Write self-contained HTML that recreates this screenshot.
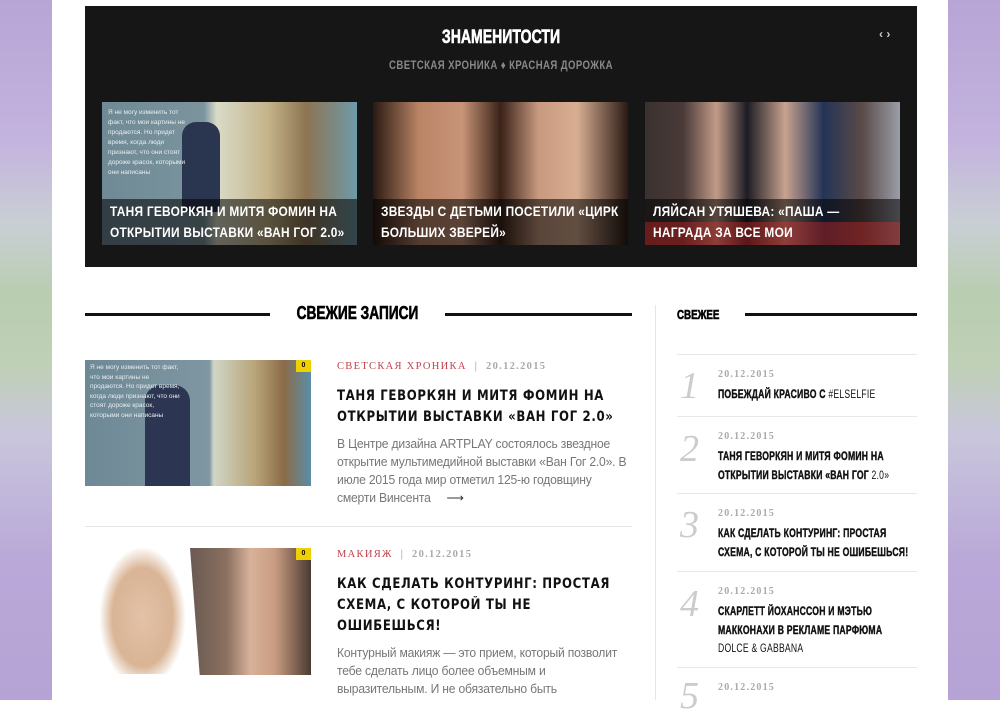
<!DOCTYPE html>
<html><head><meta charset="utf-8"><style>
*{margin:0;padding:0;box-sizing:border-box}
body{width:1000px;height:700px;overflow:hidden;background:#fff;position:relative;font-family:"Liberation Sans",sans-serif}
.side{position:absolute;top:0;width:52px;height:700px;background:linear-gradient(180deg,#b7a5d6 0%,#c3b3de 20%,#c9cfd4 32%,#b9cdb0 42%,#bfd0b6 52%,#c9c6dc 62%,#b9a8d8 80%,#b6a3d5 100%)}
.cond{font-family:"Liberation Sans",sans-serif;font-weight:bold}
.heavy{-webkit-text-stroke:.6px currentColor}
.l{display:block;white-space:nowrap;transform-origin:left center}
.abs{position:absolute}
.dark{left:85px;top:6px;width:832px;height:261px;background:#161616}
.card{position:absolute;top:102px;width:255px;height:143px;overflow:hidden}
.cap{position:absolute;left:0;right:0;bottom:0;height:46px;background:rgba(0,0,0,.55);color:#fff;font-size:14px;line-height:21px;padding:2px 8px;letter-spacing:.3px}
.cap .l{transform:scaleX(.85)}
.meta{font-family:"Liberation Serif",serif;font-size:10.5px;letter-spacing:1.3px;color:#aaa;font-weight:bold}
.meta .c{color:#c0404a;font-weight:normal}
.ptitle{font-family:"DejaVu Sans",sans-serif;font-weight:bold;font-size:14.5px;line-height:21px;letter-spacing:.8px;color:#111}
.ptitle .l{transform:scaleX(.81)}
.ex{font-size:12.5px;line-height:18px;color:#777;letter-spacing:-.2px}
.ex .l{transform:scaleX(.97)}
.badge{position:absolute;width:15px;height:12px;background:#f0d000;font-size:7px;font-weight:bold;text-align:center;line-height:12px}
.sd{position:absolute;left:677px;width:240px;border-top:1px solid #e8e8e8}
.num{position:absolute;left:680px;font-family:"Liberation Serif",serif;font-style:italic;font-size:38px;color:#ccc}
.sdate{position:absolute;left:718px;font-family:"Liberation Serif",serif;font-size:10px;letter-spacing:1.2px;color:#aaa;font-weight:bold}
.st{position:absolute;left:718px;font-size:11.5px;line-height:18.5px;color:#111;letter-spacing:.3px}
.st .l{transform:scaleX(.75)}
.st b{-webkit-text-stroke:.4px #111}
</style></head><body>
<div class="side" style="left:0"></div>
<div class="side" style="right:0"></div>
<div class="abs dark"></div>
<div class="abs cond heavy" style="left:85px;width:832px;top:27px;text-align:center;color:#fff;font-size:19px"><span class="l" style="transform:scaleX(.74);transform-origin:center">ЗНАМЕНИТОСТИ</span></div>
<div class="abs cond" style="left:85px;width:832px;top:58px;text-align:center;color:#888;font-size:12px;letter-spacing:.5px"><span class="l" style="transform:scaleX(.8);transform-origin:center">СВЕТСКАЯ ХРОНИКА ♦ КРАСНАЯ ДОРОЖКА</span></div>
<div class="abs" style="left:879px;top:27px;color:#ccc;font-size:12px;font-weight:bold">‹ ›</div>
<div class="card" style="left:102px;background:linear-gradient(90deg,#6f8a96 0%,#7b949e 40%,#d9dbc8 45%,#c5b48a 65%,#8d7452 80%,#6f9aa8 100%)">
<div class="abs" style="left:80px;top:20px;width:38px;height:90px;background:#2a3550;border-radius:14px 14px 0 0"></div>
<div class="abs" style="left:6px;top:6px;width:80px;color:#e8eef0;font-size:6.5px;line-height:10px">Я не могу изменить тот факт, что мои картины не продаются. Но придет время, когда люди признают, что они стоят дороже красок, которыми они написаны</div>
<div class="cap cond"><span class="l">ТАНЯ ГЕВОРКЯН И МИТЯ ФОМИН НА</span><span class="l">ОТКРЫТИИ ВЫСТАВКИ «ВАН ГОГ 2.0»</span></div></div>
<div class="card" style="left:373px;background:linear-gradient(90deg,#2a1a12 0%,#b98466 18%,#c89478 35%,#3a2218 50%,#c89a80 65%,#d8ae92 80%,#2a1a14 100%)">
<div class="cap cond"><span class="l">ЗВЕЗДЫ С ДЕТЬМИ ПОСЕТИЛИ «ЦИРК</span><span class="l">БОЛЬШИХ ЗВЕРЕЙ»</span></div></div>
<div class="card" style="left:645px;background:linear-gradient(90deg,#3a3230 0%,#4a3a38 15%,#c29b88 28%,#1c1c24 40%,#c8a290 55%,#243456 70%,#5a4a48 85%,#9a9ea8 100%)">
<div class="cap cond" style="background:linear-gradient(rgba(0,0,0,.55) 50%,rgba(120,20,20,.7) 50%)"><span class="l">ЛЯЙСАН УТЯШЕВА: «ПАША —</span><span class="l">НАГРАДА ЗА ВСЕ МОИ</span></div></div>

<div class="abs" style="left:85px;top:313px;width:185px;height:3px;background:#111"></div>
<div class="abs" style="left:445px;top:313px;width:187px;height:3px;background:#111"></div>
<div class="abs cond heavy" style="left:270px;width:175px;top:303px;text-align:center;font-size:18px;color:#000"><span class="l" style="transform:scaleX(.76);transform-origin:center">СВЕЖИЕ ЗАПИСИ</span></div>

<div class="abs" style="left:85px;top:360px;width:226px;height:126px;background:linear-gradient(90deg,#6e8996 0%,#7e97a2 55%,#d0d6c6 57%,#b9a57a 75%,#8c6c48 88%,#5a8ea8 100%)">
<div class="abs" style="left:60px;top:25px;width:45px;height:101px;background:#2c3652;border-radius:16px 16px 0 0"></div>
<div class="abs" style="left:5px;top:3px;width:95px;color:#e8eef0;font-size:6.5px;line-height:9.5px">Я не могу изменить тот факт, что мои картины не продаются. Но придет время, когда люди признают, что они стоят дороже красок, которыми они написаны</div></div>
<div class="badge" style="left:296px;top:360px">0</div>
<div class="abs meta" style="left:337px;top:361px"><span class="c">СВЕТСКАЯ ХРОНИКА</span> &nbsp;|&nbsp; 20.12.2015</div>
<div class="abs ptitle" style="left:337px;top:386px;width:295px"><span class="l">ТАНЯ ГЕВОРКЯН И МИТЯ ФОМИН НА</span><span class="l">ОТКРЫТИИ ВЫСТАВКИ «ВАН ГОГ 2.0»</span></div>
<div class="abs ex" style="left:337px;top:435px;width:300px"><span class="l">В Центре дизайна ARTPLAY состоялось звездное</span><span class="l">открытие мультимедийной выставки «Ван Гог 2.0». В</span><span class="l">июле 2015 года мир отметил 125-ю годовщину</span><span class="l">смерти Винсента &nbsp;&nbsp;&nbsp; <span style="color:#333">⟶</span></span></div>
<div class="abs" style="left:85px;top:526px;width:547px;height:1px;background:#e6e6e6"></div>

<div class="abs" style="left:100px;top:548px;width:85px;height:126px;background:radial-gradient(ellipse at 50% 55%,#e3c2a8 0%,#d9b495 50%,#fff 72%)"></div>
<div class="abs" style="left:190px;top:548px;width:121px;height:127px;background:linear-gradient(90deg,#6a5a52 0%,#8a7060 30%,#d7b29a 50%,#c99c82 70%,#4a3a32 100%);clip-path:polygon(0 0,100% 0,100% 100%,8% 100%)"></div>
<div class="badge" style="left:296px;top:548px">0</div>
<div class="abs meta" style="left:337px;top:549px"><span class="c">МАКИЯЖ</span> &nbsp;|&nbsp; 20.12.2015</div>
<div class="abs ptitle" style="left:337px;top:574px;width:295px"><span class="l">КАК СДЕЛАТЬ КОНТУРИНГ: ПРОСТАЯ</span><span class="l">СХЕМА, С КОТОРОЙ ТЫ НЕ</span><span class="l">ОШИБЕШЬСЯ!</span></div>
<div class="abs ex" style="left:337px;top:644px;width:300px"><span class="l">Контурный макияж — это прием, который позволит</span><span class="l">тебе сделать лицо более объемным и</span><span class="l">выразительным. И не обязательно быть</span></div>

<div class="abs" style="left:655px;top:305px;width:1px;height:395px;background:#e6e6e6"></div>
<div class="abs cond heavy" style="left:677px;top:307px;font-size:13px;color:#000"><span class="l" style="transform:scaleX(.75)">СВЕЖЕЕ</span></div>
<div class="abs" style="left:745px;top:313px;width:172px;height:3px;background:#111"></div>

<div class="sd" style="top:354px"></div>
<div class="num" style="top:364px">1</div>
<div class="sdate" style="top:369px">20.12.2015</div>
<div class="st" style="top:386px"><span class="l"><b>ПОБЕЖДАЙ КРАСИВО С</b> #ELSELFIE</span></div>
<div class="sd" style="top:416px"></div>
<div class="num" style="top:427px">2</div>
<div class="sdate" style="top:431px">20.12.2015</div>
<div class="st" style="top:448px"><span class="l"><b>ТАНЯ ГЕВОРКЯН И МИТЯ ФОМИН НА</b></span><span class="l"><b>ОТКРЫТИИ ВЫСТАВКИ «ВАН ГОГ</b> 2.0»</span></div>
<div class="sd" style="top:493px"></div>
<div class="num" style="top:503px">3</div>
<div class="sdate" style="top:508px">20.12.2015</div>
<div class="st" style="top:525px"><span class="l"><b>КАК СДЕЛАТЬ КОНТУРИНГ: ПРОСТАЯ</b></span><span class="l"><b>СХЕМА, С КОТОРОЙ ТЫ НЕ ОШИБЕШЬСЯ!</b></span></div>
<div class="sd" style="top:571px"></div>
<div class="num" style="top:582px">4</div>
<div class="sdate" style="top:586px">20.12.2015</div>
<div class="st" style="top:603px"><span class="l"><b>СКАРЛЕТТ ЙОХАНССОН И МЭТЬЮ</b></span><span class="l"><b>МАККОНАХИ В РЕКЛАМЕ ПАРФЮМА</b></span><span class="l">DOLCE &amp; GABBANA</span></div>
<div class="sd" style="top:667px"></div>
<div class="num" style="top:674px">5</div>
<div class="sdate" style="top:682px">20.12.2015</div>
</body></html>
